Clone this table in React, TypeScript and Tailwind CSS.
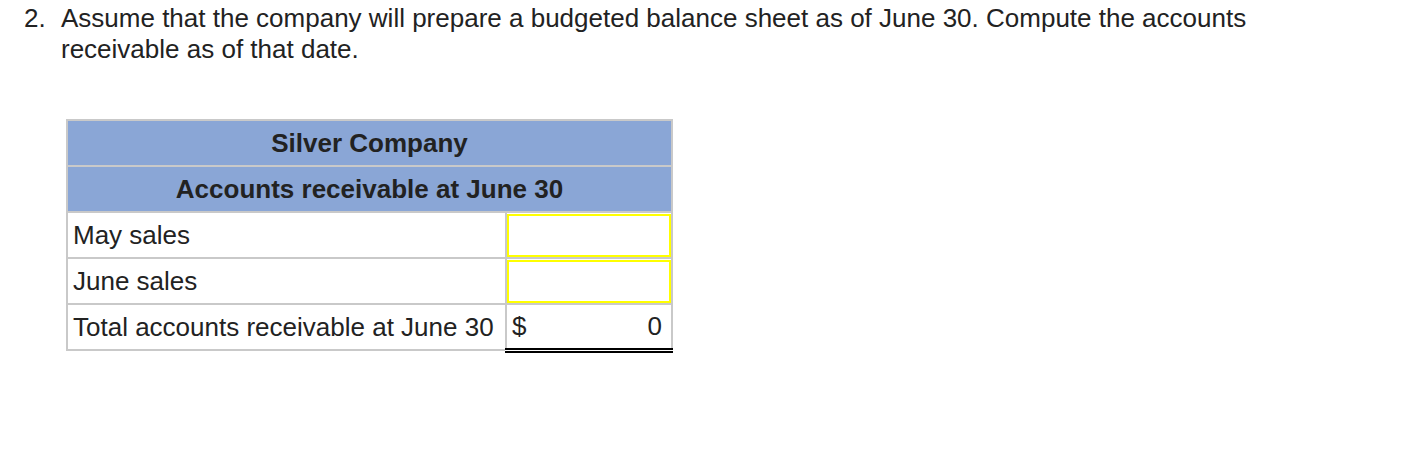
export default function App() {
  return (
    <div className="w-[1420px] h-[456px] bg-white text-[#222] pt-[3px]" style={{ fontFamily: '"Liberation Sans", Arial, sans-serif' }}>
      <div className="flex text-[26px] leading-[31px]">
        <span className="w-[61px] pl-[24px] shrink-0">2.</span>
        <p className="w-[1260px]">
          Assume that the company will prepare a budgeted balance sheet as of June 30. Compute the accounts receivable as of that date.
        </p>
      </div>

      <table className="ml-[66px] mt-[54px] border-collapse text-[26px] w-[607px]">
        <tbody>
          <tr>
            <th colSpan={2} className="h-[46px] p-0 border-2 border-[#c9c9c9] bg-[#8aa6d6] font-bold text-center">Silver Company</th>
          </tr>
          <tr>
            <th colSpan={2} className="h-[46px] p-0 border-2 border-[#c9c9c9] bg-[#8aa6d6] font-bold text-center">Accounts receivable at June 30</th>
          </tr>
          <tr>
            <td className="h-[46px] w-[439px] px-[5px] py-0 border-2 border-[#c9c9c9]">May sales</td>
            <td className="h-[46px] p-0 border-2 border-[#c9c9c9]">
              <div className="h-[43px] border-2 border-[#ffff00]"></div>
            </td>
          </tr>
          <tr>
            <td className="h-[46px] px-[5px] py-0 border-2 border-[#c9c9c9]">June sales</td>
            <td className="h-[46px] p-0 border-2 border-[#c9c9c9]">
              <div className="h-[43px] border-2 border-[#ffff00]"></div>
            </td>
          </tr>
          <tr>
            <td className="h-[46px] px-[5px] py-0 border-2 border-[#c9c9c9]">Total accounts receivable at June 30</td>
            <td className="h-[46px] pl-[5px] pr-[9px] py-0 border-2 border-[#c9c9c9] border-b-[5px] border-b-black border-double">
              <div className="flex justify-between">
                <span>$</span>
                <span>0</span>
              </div>
            </td>
          </tr>
        </tbody>
      </table>
    </div>
  )
}
